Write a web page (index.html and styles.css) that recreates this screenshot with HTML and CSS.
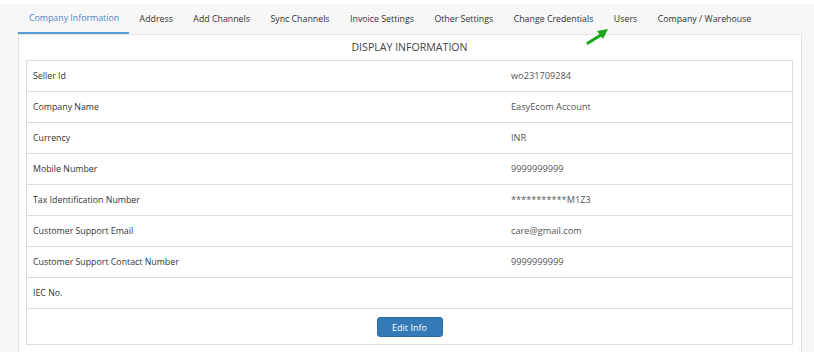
FILE: index.html
```html
<!DOCTYPE html>
<html>
<head>
    <title>Company Information</title>
    <link rel="stylesheet" href="styles.css">
</head>
<body>
    <div class="page">
        <ul class="tabs">
            <li class="tab active">Company Information</li>
            <li class="tab">Address</li>
            <li class="tab">Add Channels</li>
            <li class="tab">Sync Channels</li>
            <li class="tab">Invoice Settings</li>
            <li class="tab">Other Settings</li>
            <li class="tab">Change Credentials</li>
            <li class="tab users">Users
                <svg class="arrow" width="26" height="18" viewBox="0 0 26 18">
                    <path d="M2 15 L15 7" stroke="#1aa81a" stroke-width="3.2" stroke-linecap="round"/>
                    <path d="M11 3 L22 1 L17 11 Z" fill="#1aa81a"/>
                </svg>
            </li>
            <li class="tab">Company / Warehouse</li>
        </ul>

        <div class="panel">
            <div class="panel-title">DISPLAY INFORMATION</div>
            <div class="info-table">
                <div class="row"><div class="label">Seller Id</div><div class="value">wo231709284</div></div>
                <div class="row"><div class="label">Company Name</div><div class="value">EasyEcom Account</div></div>
                <div class="row"><div class="label">Currency</div><div class="value">INR</div></div>
                <div class="row"><div class="label">Mobile Number</div><div class="value">9999999999</div></div>
                <div class="row"><div class="label">Tax Identification Number</div><div class="value">***********M1Z3</div></div>
                <div class="row"><div class="label">Customer Support Email</div><div class="value">care@gmail.com</div></div>
                <div class="row"><div class="label">Customer Support Contact Number</div><div class="value">9999999999</div></div>
                <div class="row"><div class="label">IEC No.</div><div class="value"></div></div>
                <div class="actions">
                    <button class="btn">Edit Info</button>
                </div>
            </div>
        </div>
    </div>
</body>
</html>
```

FILE: styles.css
```css
body { margin: 0; background: #fff; font-family: "Open Sans", Arial, sans-serif; color: #333; }
.page { margin-top: 4px; height: 348px; background: #f7f7f7; padding-left: 18px; padding-right: 12px; overflow: hidden; }

.tabs { list-style: none; margin: 0; padding: 0; display: flex; height: 30px; }
.tab { position: relative; padding: 0 9.5px 0 11px; font-size: 8.8px; line-height: 30px; color: #333; white-space: nowrap; }
.tab.active { color: #4a86c8; border-bottom: 2px solid #5b9bd5; line-height: 28px; }
.arrow { position: absolute; left: -17px; top: 24px; }

.panel { background: #fff; border: 1px solid #e3e3e3; border-bottom: none; padding: 0 8px 20px 7px; }
.panel-title { text-align: center; font-size: 10.6px; color: #444; height: 25px; line-height: 25px; }

.info-table { border: 1px solid #ddd; }
.row { display: grid; grid-template-columns: 484px 1fr; height: 30px; border-bottom: 1px solid #ddd; font-size: 8.8px; line-height: 30px; }
.label { padding-left: 6px; color: #333; }
.value { color: #555; font-size: 9.2px; }
.actions { height: 35px; display: flex; align-items: center; justify-content: center; }
.btn { background: #337ab7; border: 1px solid #2e6da4; border-radius: 3px; color: #fff; font-family: "Open Sans", Arial, sans-serif; font-size: 9px; width: 66px; height: 20px; padding: 0; margin-top: 1px; }
```
